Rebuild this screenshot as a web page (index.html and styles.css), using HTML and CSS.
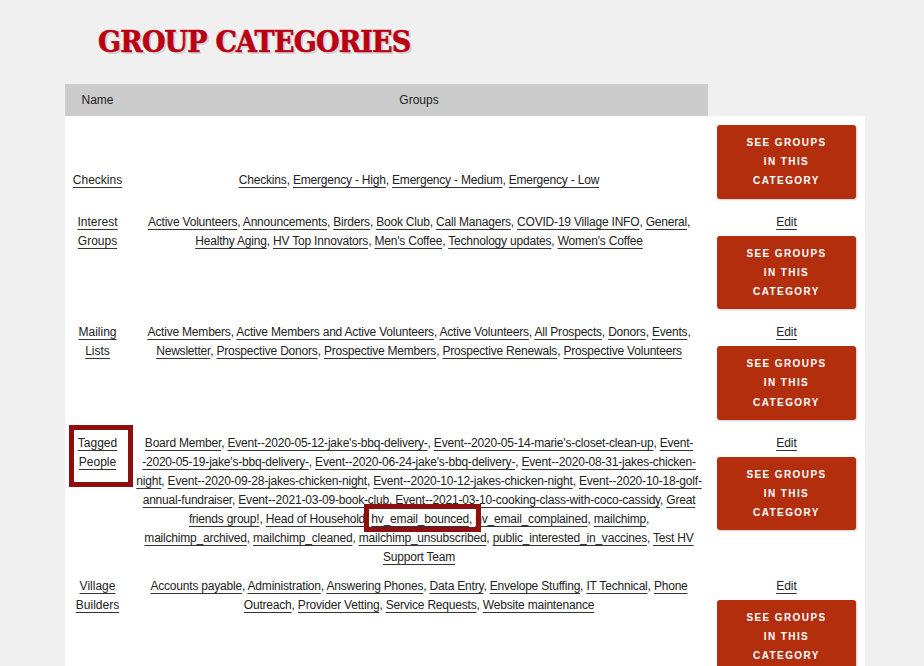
FILE: index.html
```html
<!DOCTYPE html>
<html lang="en">
<head>
  <meta charset="UTF-8">
  <meta name="viewport" content="width=device-width, initial-scale=1.0">
  <title>Group Categories</title>
  <link rel="stylesheet" href="styles.css">
</head>
<body>
  <div class="page">
    <h1 class="page-title">Group Categories</h1>

    <table class="categories">
      <colgroup>
        <col class="col-name">
        <col class="col-groups">
        <col class="col-actions">
      </colgroup>
      <thead>
        <tr>
          <th>Name</th>
          <th>Groups</th>
          <th class="blank"></th>
        </tr>
      </thead>
      <tbody>
        <!-- Checkins -->
        <tr>
          <td class="cat-name"><a href="#">Checkins</a></td>
          <td class="cat-groups">
            <a href="#">Checkins</a>, <a href="#">Emergency - High</a>, <a href="#">Emergency - Medium</a>, <a href="#">Emergency - Low</a>
          </td>
          <td class="cat-actions"><a class="see-groups" href="#">See groups in this category</a></td>
        </tr>

        <!-- Interest Groups -->
        <tr>
          <td class="cat-name"><a href="#">Interest Groups</a></td>
          <td class="cat-groups">
            <a href="#">Active Volunteers</a>, <a href="#">Announcements</a>, <a href="#">Birders</a>, <a href="#">Book Club</a>, <a href="#">Call Managers</a>, <a href="#">COVID-19 Village INFO</a>, <a href="#">General</a>, <a href="#">Healthy Aging</a>, <a href="#">HV Top Innovators</a>, <a href="#">Men's Coffee</a>, <a href="#">Technology updates</a>, <a href="#">Women's Coffee</a>
          </td>
          <td class="cat-actions"><a class="edit" href="#">Edit</a><br><a class="see-groups" href="#">See groups in this category</a></td>
        </tr>

        <!-- Mailing Lists -->
        <tr>
          <td class="cat-name"><a href="#">Mailing Lists</a></td>
          <td class="cat-groups">
            <a href="#">Active Members</a>, <a href="#">Active Members and Active Volunteers</a>, <a href="#">Active Volunteers</a>, <a href="#">All Prospects</a>, <a href="#">Donors</a>, <a href="#">Events</a>, <a href="#">Newsletter</a>, <a href="#">Prospective Donors</a>, <a href="#">Prospective Members</a>, <a href="#">Prospective Renewals</a>, <a href="#">Prospective Volunteers</a>
          </td>
          <td class="cat-actions"><a class="edit" href="#">Edit</a><br><a class="see-groups" href="#">See groups in this category</a></td>
        </tr>

        <!-- Tagged People -->
        <tr>
          <td class="cat-name">
            <div class="name-wrap">
              <a href="#">Tagged People</a>
              <span class="flag-box"></span>
            </div>
          </td>
          <td class="cat-groups">
            <a href="#">Board Member</a>, <a href="#">Event--2020-05-12-jake's-bbq-delivery-</a>, <a href="#">Event--2020-05-14-marie's-closet-clean-up</a>, <a href="#">Event--2020-05-19-jake's-bbq-delivery-</a>, <a href="#">Event--2020-06-24-jake's-bbq-delivery-</a>, <a href="#">Event--2020-08-31-jakes-chicken-night</a>, <a href="#">Event--2020-09-28-jakes-chicken-night</a>, <a href="#">Event--2020-10-12-jakes-chicken-night</a>, <a href="#">Event--2020-10-18-golf-annual-fundraiser</a>, <a href="#">Event--2021-03-09-book-club</a>, <a href="#">Event--2021-03-10-cooking-class-with-coco-cassidy</a>, <a href="#">Great friends group!</a>, <a href="#">Head of Household</a>, <span class="flag"><a href="#">hv_email_bounced</a>,</span> <a href="#">hv_email_complained</a>, <a href="#">mailchimp</a>, <a href="#">mailchimp_archived</a>, <a href="#">mailchimp_cleaned</a>, <a href="#">mailchimp_unsubscribed</a>, <a href="#">public_interested_in_vaccines</a>, <a href="#">Test HV Support Team</a>
          </td>
          <td class="cat-actions"><a class="edit" href="#">Edit</a><br><a class="see-groups" href="#">See groups in this category</a></td>
        </tr>

        <!-- Village Builders -->
        <tr>
          <td class="cat-name"><a href="#">Village Builders</a></td>
          <td class="cat-groups">
            <a href="#">Accounts payable</a>, <a href="#">Administration</a>, <a href="#">Answering Phones</a>, <a href="#">Data Entry</a>, <a href="#">Envelope Stuffing</a>, <a href="#">IT Technical</a>, <a href="#">Phone Outreach</a>, <a href="#">Provider Vetting</a>, <a href="#">Service Requests</a>, <a href="#">Website maintenance</a>
          </td>
          <td class="cat-actions"><a class="edit" href="#">Edit</a><br><a class="see-groups" href="#">See groups in this category</a></td>
        </tr>
      </tbody>
    </table>
  </div>
</body>
</html>
```

FILE: styles.css
```css
body {
  margin: 0;
  padding: 0;
  background: #f0f0f0;
  font-family: "Liberation Sans", Arial, sans-serif;
  font-size: 12px;
  color: #222;
}

.page {
  padding: 0 0 40px 65px;
}

.page-title {
  margin: 24px 0 24px 33px;
  font-family: "DejaVu Serif Condensed", "DejaVu Serif", serif;
  font-weight: bold;
  font-size: 30px;
  line-height: 36px;
  letter-spacing: -0.8px;
  text-transform: uppercase;
  color: #b80012;
  -webkit-text-stroke: 0.6px #b80012;
  text-shadow: 2px 2px 0 #d4d4d4;
}

/* table */
.categories {
  width: 800px;
  table-layout: fixed;
  border-collapse: collapse;
  border-spacing: 0;
}
.col-name { width: 65px; }
.col-groups { width: 578px; }
.col-actions { width: 157px; }

.categories th {
  padding: 9px 5px;
  line-height: 14px;
  font-size: 12px;
  font-weight: normal;
  text-align: center;
  background: #cccccc;
}
.categories th.blank {
  background: transparent;
}

.categories tbody tr {
  background: #fff;
}
.categories td {
  padding: 5px;
  line-height: 19px;
  text-align: center;
  vertical-align: baseline;
}
.categories td.cat-groups {
  letter-spacing: -0.2px;
}

.categories a {
  color: #222;
  text-decoration: underline;
  text-decoration-color: #333;
  text-underline-offset: 3px;
}

/* buttons */
.categories a.see-groups {
  display: inline-block;
  box-sizing: border-box;
  width: 139px;
  margin: 4px 0;
  padding: 8px 24px;
  background: #b32e0c;
  color: #fff;
  font-size: 10px;
  font-weight: bold;
  letter-spacing: 1.4px;
  text-transform: uppercase;
  text-decoration: none;
  line-height: 19.2px;
  border-radius: 3px;
  box-shadow: 1px 1px 2px rgba(0, 0, 0, 0.2);
}

/* highlight boxes */
.name-wrap {
  position: relative;
}
.flag-box {
  position: absolute;
  left: -1px;
  top: -9px;
  width: 64px;
  height: 62px;
  box-sizing: border-box;
  border: 5px solid #8e0f0f;
}
.flag {
  position: relative;
}
.flag::after {
  content: '';
  position: absolute;
  left: -7px;
  right: -9px;
  top: -8px;
  bottom: -6px;
  border: 5px solid #8e0f0f;
}
```
